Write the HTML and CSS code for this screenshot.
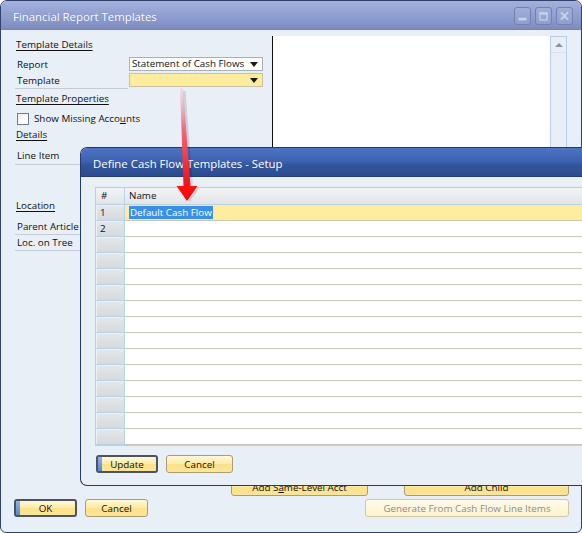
FILE: index.html
```html
<!DOCTYPE html>
<html>
<head>
<meta charset="utf-8">
<title>Financial Report Templates</title>
<link rel="stylesheet" href="styles.css">
</head>
<body>
<div class="desk">
  <div class="win">
    <div class="titlebar">
      <span class="title">Financial Report Templates</span>
      <div class="wbtns">
        <span class="wbtn"><svg width="17" height="18" viewBox="0 0 17 18"><rect x="4" y="11" width="9" height="3" fill="#c9d1ea"/></svg></span>
        <span class="wbtn"><svg width="17" height="18" viewBox="0 0 17 18"><rect x="4.5" y="5.5" width="8" height="8" fill="none" stroke="#c9d1ea" stroke-width="1.4"/><rect x="4" y="5" width="9" height="2.5" fill="#c9d1ea"/></svg></span>
        <span class="wbtn"><svg width="17" height="18" viewBox="0 0 17 18"><path d="M5 5.5 L12 12.5 M12 5.5 L5 12.5" stroke="#c9d1ea" stroke-width="2.2" stroke-linecap="round"/></svg></span>
      </div>
    </div>
    <div class="wbody">
      <div class="main">
        <div class="leftcol">
          <div class="sec"><u>Template Details</u></div>
          <div class="frow r-report">
            <span class="lbl">Report</span>
            <span class="combo">Statement of Cash Flows<i class="tri"></i></span>
          </div>
          <div class="frow">
            <span class="lbl lined">Template</span>
            <span class="combo yellow"><i class="tri"></i></span>
          </div>
          <div class="sec s-props"><u>Template Properties</u></div>
          <div class="chkrow"><span class="chk"></span><span>Show Missing Acco<u>u</u>nts</span></div>
          <div class="sec"><u>Details</u></div>
          <div class="frow r-line"><span class="lbl lined">Line Item</span></div>
          <div class="sec s-loc"><u>Location</u></div>
          <div class="frow r-parent"><span class="lbl lined">Parent Article</span></div>
          <div class="frow"><span class="lbl lined">Loc. on Tree</span></div>
        </div>
        <div class="rightpanel">
          <div class="list"></div>
          <div class="vscroll"><div class="sbup"><i class="uptri"></i></div></div>
        </div>
      </div>
      <div class="actions">
        <span class="btn b-same">Add S<u>a</u>me-Level Acct</span>
        <span class="btn b-child">Add Child</span>
      </div>
      <div class="footer">
        <span class="btn def b-ok">OK</span>
        <span class="btn b-cancel">Cancel</span>
        <span class="btn disabled b-gen">Generate From Cash Flow Line Items</span>
      </div>
    </div>
  </div>

  <div class="dialog">
    <div class="dtitle">Define Cash Flow Templates - Setup</div>
    <div class="dbody">
      <div class="grid">
        <div class="gh gnum">#</div><div class="gh gname">Name</div>
        <div class="rn">1</div><div class="nc sel"><span class="seltext">Default Cash Flow</span></div>
        <div class="rn">2</div><div class="nc"></div>
        <div class="rn"></div><div class="nc"></div>
        <div class="rn"></div><div class="nc"></div>
        <div class="rn"></div><div class="nc"></div>
        <div class="rn"></div><div class="nc"></div>
        <div class="rn"></div><div class="nc"></div>
        <div class="rn"></div><div class="nc"></div>
        <div class="rn"></div><div class="nc"></div>
        <div class="rn"></div><div class="nc"></div>
        <div class="rn"></div><div class="nc"></div>
        <div class="rn"></div><div class="nc"></div>
        <div class="rn"></div><div class="nc"></div>
        <div class="rn"></div><div class="nc"></div>
        <div class="rn"></div><div class="nc"></div>
      </div>
      <div class="dbtns">
        <span class="btn def b-upd">Update</span>
        <span class="btn b-dcancel">Cancel</span>
      </div>
    </div>
  </div>

  <svg class="arrow" width="40" height="122" viewBox="0 0 40 122">
    <defs>
      <linearGradient id="ag" x1="0" y1="0" x2="0" y2="1">
        <stop offset="0" stop-color="#f2b8c0" stop-opacity="0.3"/>
        <stop offset="0.35" stop-color="#ee6f80"/>
        <stop offset="0.75" stop-color="#f2202c"/>
        <stop offset="1" stop-color="#ff0000"/>
      </linearGradient>
    </defs>
    <path d="M18 6 L20.5 6 L28 103 L34.5 103 L24.5 117 L14.5 103 L21 103 Z" fill="#000" opacity="0.12"/>
    <path d="M15 3 L18 3 L25.5 101 L32.5 101 L22 116 L11.5 101 L18.5 101 Z" fill="url(#ag)"/>
  </svg>
</div>
</body>
</html>
```

FILE: styles.css
```css
html, body {
  margin: 0;
  padding: 0;
  background: #ffffff;
}
body {
  font-family: "Open Sans", "Noto Sans", sans-serif;
  font-size: 9.8px;
  color: #101010;
}
.desk {
  position: relative;
  width: 582px;
  height: 533px;
  overflow: hidden;
}

/* main window */
.win {
  width: 582px;
  height: 533px;
  box-sizing: border-box;
  border: 1px solid #2f426e;
  border-radius: 7px 7px 6px 6px;
  background: #e8eff7;
  display: flex;
  flex-direction: column;
  overflow: hidden;
}
.titlebar {
  height: 29px;
  flex: none;
  display: flex;
  align-items: center;
  padding-left: 12px;
  background: linear-gradient(#a3b1dc, #93a3d3 40%, #8999cc 70%, #7c8bbb);
  border-bottom: 1px solid #7684ad;
  box-sizing: border-box;
}
.title {
  color: #ffffff;
  font-size: 11.4px;
  padding-top: 3px;
  text-shadow: 0 0 1px rgba(60, 70, 110, 0.4);
}
.wbtns {
  margin-left: auto;
  margin-right: 8px;
  display: flex;
  gap: 4px;
  margin-top: 1px;
}
.wbtn {
  width: 17px;
  height: 18px;
  box-sizing: border-box;
  border: 1px solid #7282b0;
  border-radius: 3px;
  background: linear-gradient(#a0aed8, #8f9ecd);
  display: flex;
  align-items: center;
  justify-content: center;
}
.wbtn svg {
  display: block;
}

.wbody {
  flex: 1;
  display: flex;
  flex-direction: column;
  padding: 6px 14px 0 13px;
}
.main {
  display: flex;
  height: 437px;
}
.leftcol {
  width: 258px;
  flex: none;
  display: flex;
  flex-direction: column;
  padding-top: 1px;
}
.sec {
  height: 16px;
  line-height: 16px;
  padding-left: 2px;
}
.sec u {
  text-decoration-thickness: 1px;
  text-underline-offset: 2px;
}
.frow {
  height: 16px;
  display: flex;
  align-items: stretch;
}
.r-report { margin-top: 4px; }
.s-props { margin-top: 2px; }
.r-line { margin-top: 5px; height: 17px; }
.s-loc { margin-top: 33px; }
.r-parent { margin-top: 5px; }
.lbl {
  width: 113px;
  margin-left: 1px;
  padding-left: 2px;
  box-sizing: border-box;
  line-height: 16px;
  flex: none;
}
.lbl.lined {
  border-bottom: 1px solid #c5ccd4;
}
.combo {
  position: relative;
  margin-left: 1px;
  width: 134px;
  height: 14px;
  margin-top: 0px;
  box-sizing: border-box;
  border: 1px solid #a9b0b8;
  background: #ffffff;
  line-height: 12px;
  padding-left: 2px;
  font-size: 9.8px;
  white-space: nowrap;
}
.combo.yellow {
  background: #fdeb9e;
  border-color: #c9c2a2;
}
.tri {
  position: absolute;
  right: 4px;
  top: 4px;
  width: 0;
  height: 0;
  border-left: 4px solid transparent;
  border-right: 4px solid transparent;
  border-top: 5px solid #1a1a1a;
}
.chkrow {
  margin-top: 3px;
  height: 17px;
  display: flex;
  align-items: center;
  padding-left: 3px;
  gap: 5px;
}
.chk {
  width: 12px;
  height: 12px;
  box-sizing: border-box;
  border: 1px solid #6f7c8a;
  background: linear-gradient(135deg, #e6e9ec, #ffffff 60%);
}

.rightpanel {
  flex: 1;
  display: flex;
  background: #ffffff;
  border-left: 1px solid #101010;
}
.list {
  flex: 1;
}
.vscroll {
  width: 17px;
  box-sizing: border-box;
  border: 1px solid #b7cde6;
  background: #e9eff6;
}
.sbup {
  height: 15px;
  border-bottom: 1px solid #d3dfec;
  display: flex;
  align-items: center;
  justify-content: center;
}
.uptri {
  width: 0;
  height: 0;
  border-left: 4px solid transparent;
  border-right: 4px solid transparent;
  border-bottom: 4px solid #8b939c;
}

/* buttons */
.btn {
  height: 18px;
  box-sizing: border-box;
  border: 1px solid #a89e72;
  border-radius: 3px;
  background: linear-gradient(#fff8d6, #fdeaa6 50%, #fbe18a 51%, #fbe59a);
  display: flex;
  align-items: center;
  justify-content: center;
  font-size: 9.8px;
  color: #101010;
  white-space: nowrap;
}
.btn.def {
  border: 2px solid #4b5262;
  position: relative;
}
.btn.def::before {
  content: "";
  position: absolute;
  left: 0;
  top: 0;
  bottom: 0;
  width: 4px;
  background: linear-gradient(#8fb2e8, #5a86cf);
}
.btn.disabled {
  background: linear-gradient(#fffbea, #fdf3cf);
  border-color: #cfc7a6;
  color: #8c8c8c;
}
.actions {
  margin-top: 5px;
  display: flex;
  justify-content: flex-end;
  gap: 36px;
  margin-right: -2px;
}
.b-same { width: 137px; }
.b-child { width: 165px; }
.footer {
  margin-top: 3px;
  display: flex;
  gap: 8px;
  padding-left: 0px;
  margin-right: -2px;
}
.b-ok { width: 63px; }
.b-cancel { width: 63px; }
.b-gen { width: 204px; margin-left: auto; }

/* dialog */
.dialog {
  position: absolute;
  left: 80px;
  top: 147px;
  width: 540px;
  height: 339px;
  box-sizing: border-box;
  border: 1px solid #23387a;
  border-right: none;
  border-radius: 7px 0 0 7px;
  background: #e8eff7;
  overflow: hidden;
  display: flex;
  flex-direction: column;
}
.dtitle {
  height: 29px;
  flex: none;
  box-sizing: border-box;
  background: linear-gradient(#4c73c2, #3e63b3 45%, #335599 60%, #2c4b8e);
  border-bottom: 1px solid #243e7c;
  color: #ffffff;
  font-size: 11.4px;
  padding-left: 12px;
  padding-top: 3px;
  display: flex;
  align-items: center;
}
.dbody {
  padding: 10px 0 0 14px;
}
.grid {
  display: grid;
  grid-template-columns: 30px 1fr;
  grid-auto-rows: 16px;
  grid-template-rows: 18px;
  width: 520px;
  border-bottom: 1px solid #b9d0e9;
}
.gh {
  box-sizing: border-box;
  border-top: 1px solid #b9d0e9;
  border-bottom: 1px solid #b9d0e9;
  background: linear-gradient(#f2f3f4, #e2e5e8);
  line-height: 16px;
  padding-left: 5px;
}
.gnum {
  border-left: 1px solid #b9d0e9;
  border-right: 1px solid #b9d0e9;
}
.gname {
  padding-left: 4px;
}
.rn {
  box-sizing: border-box;
  border-left: 1px solid #b9d0e9;
  border-right: 1px solid #b9d0e9;
  border-bottom: 1px solid #b9d0e9;
  background: linear-gradient(#e5e7e9, #d7dadd);
  box-shadow: inset 0 1px 0 #eef0f2, inset 1px 0 0 #eef0f2;
  line-height: 15px;
  padding-left: 4px;
}
.nc {
  box-sizing: border-box;
  border-bottom: 1px solid #c7c7b7;
  background: #ffffff;
  display: flex;
  align-items: center;
  padding-left: 4px;
}
.nc.sel {
  background: #feed9e;
}
.seltext {
  background: #3b8fe6;
  color: #ffffff;
  line-height: 13px;
  padding: 0 1px;
}
.dbtns {
  margin-top: 9px;
  display: flex;
  gap: 8px;
  padding-left: 1px;
}
.b-upd { width: 62px; }
.b-dcancel { width: 67px; }

.arrow {
  position: absolute;
  left: 165px;
  top: 85px;
}
```
